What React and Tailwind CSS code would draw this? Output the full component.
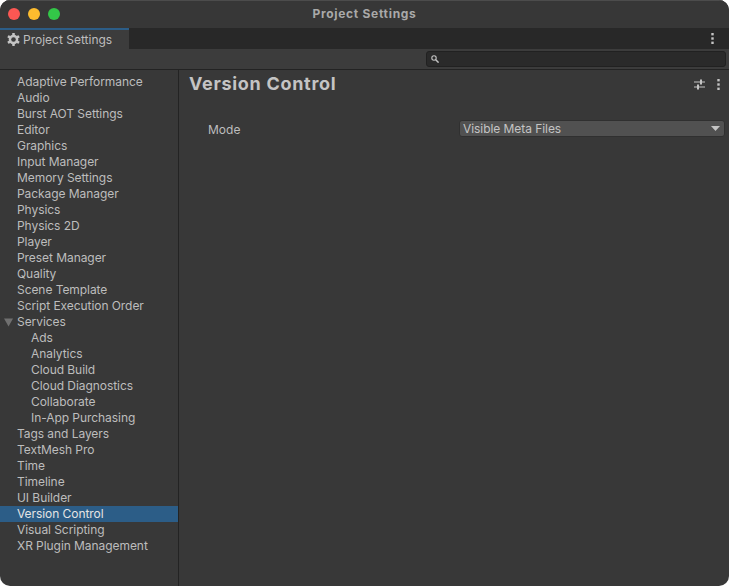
import React from "react";

const font = "font-['Inter','Liberation_Sans',sans-serif]";

const items = [
  { label: "Adaptive Performance" },
  { label: "Audio" },
  { label: "Burst AOT Settings" },
  { label: "Editor" },
  { label: "Graphics" },
  { label: "Input Manager" },
  { label: "Memory Settings" },
  { label: "Package Manager" },
  { label: "Physics" },
  { label: "Physics 2D" },
  { label: "Player" },
  { label: "Preset Manager" },
  { label: "Quality" },
  { label: "Scene Template" },
  { label: "Script Execution Order" },
  { label: "Services", open: true },
  { label: "Ads", child: true },
  { label: "Analytics", child: true },
  { label: "Cloud Build", child: true },
  { label: "Cloud Diagnostics", child: true },
  { label: "Collaborate", child: true },
  { label: "In-App Purchasing", child: true },
  { label: "Tags and Layers" },
  { label: "TextMesh Pro" },
  { label: "Time" },
  { label: "Timeline" },
  { label: "UI Builder" },
  { label: "Version Control", selected: true },
  { label: "Visual Scripting" },
  { label: "XR Plugin Management" },
];

const SidebarRow = ({ label, child, open, selected }) => (
  <div
    className={`relative h-4 flex items-center text-[12px] leading-4 tracking-[-0.06px] ${
      child ? "pl-[31px]" : "pl-[17px]"
    } ${selected ? "bg-[#2c5d87] text-[#e4e4e4]" : "text-[#bdbdbd]"}`}
  >
    {open && (
      <svg className="absolute left-[4px] top-[4px]" width="9" height="9" viewBox="0 0 9 9">
        <path d="M0 0.5h9L4.5 8.5z" fill="#707070" />
      </svg>
    )}
    {label}
  </div>
);

const Dots = () => (
  <svg width="3" height="11" viewBox="0 0 3 11">
    <rect x="0.3" y="0" width="2.4" height="2.4" fill="#c4c4c4" />
    <rect x="0.3" y="4.3" width="2.4" height="2.4" fill="#c4c4c4" />
    <rect x="0.3" y="8.6" width="2.4" height="2.4" fill="#c4c4c4" />
  </svg>
);

// gear with a round hole, like the tab icon in the editor
const Gear = () => (
  <svg width="13" height="13" viewBox="0 0 13 13">
    <g fill="#c4c4c4">
      <circle cx="6.5" cy="6.5" r="4.8" />
      <rect x="5.2" y="0" width="2.6" height="13" rx="0.4" />
      <rect x="5.2" y="0" width="2.6" height="13" rx="0.4" transform="rotate(60 6.5 6.5)" />
      <rect x="5.2" y="0" width="2.6" height="13" rx="0.4" transform="rotate(120 6.5 6.5)" />
    </g>
    <circle cx="6.5" cy="6.5" r="2.3" fill="#3c3c3c" />
  </svg>
);

const SearchGlyph = () => (
  <svg width="8" height="8" viewBox="0 0 8 8" fill="none">
    <circle cx="3" cy="3" r="2.2" stroke="#c4c4c4" strokeWidth="1.1" />
    <path d="M4.7 4.7L7.6 7.6" stroke="#c4c4c4" strokeWidth="1.5" />
  </svg>
);

const Sliders = () => (
  <svg width="11" height="11" viewBox="0 0 11 11">
    <rect x="0" y="2.5" width="11" height="1" fill="#c4c4c4" />
    <rect x="0" y="7.5" width="11" height="1" fill="#c4c4c4" />
    <rect x="6" y="0.5" width="2" height="5" fill="#c4c4c4" />
    <rect x="3" y="5.5" width="2" height="5" fill="#c4c4c4" />
  </svg>
);

export default function App() {
  return (
    <div className={`w-[729px] h-[586px] bg-white ${font}`}>
      <div className="w-full h-full rounded-[10px] overflow-hidden flex flex-col bg-[#383838]">
        {/* title bar */}
        <div className="relative h-[28px] shrink-0 bg-[#373737] border-t border-[#4c4c4c] flex items-center justify-center">
          <div className="absolute left-[8px] top-[7px] flex gap-[8px]">
            <div className="w-3 h-3 rounded-full bg-[#fc5753]" />
            <div className="w-3 h-3 rounded-full bg-[#fdbc2e]" />
            <div className="w-3 h-3 rounded-full bg-[#33c748]" />
          </div>
          <span className="text-[12px] font-bold tracking-[0.7px] text-[#a9a9a9] -mt-[1px]">Project Settings</span>
        </div>

        {/* tab bar */}
        <div className="h-[21px] shrink-0 bg-[#282828] flex justify-between">
          <div className="w-[129px] h-full bg-[#3c3c3c] border-t-2 border-[#2c5d87] flex items-center pl-[7px] gap-[3px]">
            <Gear />
            <span className="text-[12px] text-[#bdbdbd]">Project Settings</span>
          </div>
          <div className="flex items-center pr-[15px]">
            <Dots />
          </div>
        </div>

        {/* toolbar */}
        <div className="h-[21px] shrink-0 bg-[#3c3c3c] border-b border-[#232323] flex items-center justify-end pr-[3px]">
          <div className="w-[300px] h-[16px] rounded-[3px] bg-[#2a2a2a] border border-[#212121] flex items-center pl-[4px]">
            <SearchGlyph />
          </div>
        </div>

        {/* body */}
        <div className="flex-1 flex min-h-0">
          <div className="w-[179px] shrink-0 border-r border-[#232323] pt-[4px]">
            {items.map((item) => (
              <SidebarRow key={item.label} {...item} />
            ))}
          </div>

          <div className="flex-1 pl-[10px] pr-[4px]">
            <div className="flex items-center justify-between h-[28px]">
              <h1 className="text-[18px] font-bold tracking-[0.7px] text-[#c4c4c4] leading-[26px] -mt-[1px]">Version Control</h1>
              <div className="flex items-center gap-[12px] pr-[5px]">
                <Sliders />
                <Dots />
              </div>
            </div>
            <div className="flex items-center mt-[22px] h-[17px]">
              <span className="w-[270px] pl-[19px] text-[12px] text-[#bdbdbd] mt-[2px]">Mode</span>
              <div className="flex-1 h-[17px] rounded-[3px] bg-[#515151] border border-[#303030] flex items-center justify-between pl-[3px] pr-[4px]">
                <span className="text-[12px] tracking-[-0.06px] text-[#c4c4c4]">Visible Meta Files</span>
                <svg width="9" height="5" viewBox="0 0 9 5">
                  <path d="M0 0h9L4.5 5z" fill="#c4c4c4" />
                </svg>
              </div>
            </div>
          </div>
        </div>
      </div>
    </div>
  );
}
